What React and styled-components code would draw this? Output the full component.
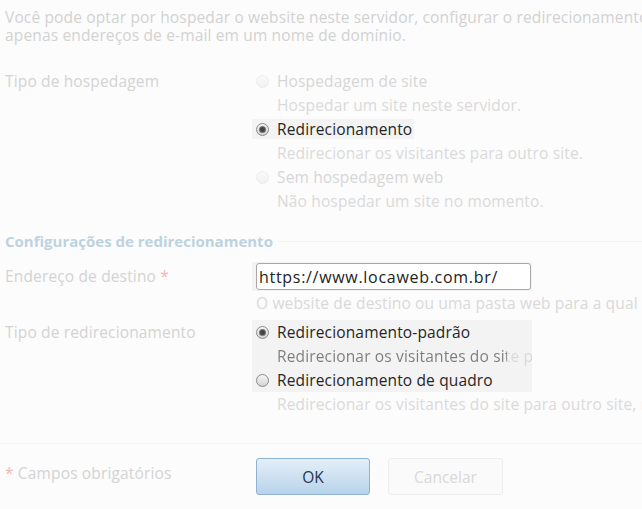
import React from 'react';
import styled, { createGlobalStyle } from 'styled-components';

const GlobalStyle = createGlobalStyle`
  html, body {
    margin: 0;
    padding: 0;
    background: #fcfcfc;
    overflow: hidden;
  }
`;

const Page = styled.div`
  width: 642px;
  height: 509px;
  overflow: hidden;
  padding-top: 8px;
  box-sizing: border-box;
  background: #fcfcfc;
  font-family: 'Open Sans', 'Noto Sans', sans-serif;
  font-size: 15.5px;
  letter-spacing: 0.15px;
  color: #d4d4d4;
`;

const Intro = styled.p`
  margin: 0;
  padding-left: 5px;
  line-height: 18px;
  white-space: nowrap;
  color: #d2d2d2;
`;

const FormRow = styled.div`
  display: grid;
  grid-template-columns: 252px 1fr;
  margin-top: ${(p) => p.$gap}px;
`;

const FieldLabel = styled.div`
  padding-left: 5px;
  line-height: ${(p) => p.$line || 24}px;
  color: #d3d3d3;
  white-space: nowrap;
`;

const Required = styled.span`
  color: #f4b8b0;
`;

const Options = styled.div`
  display: flex;
  flex-direction: column;
`;

const OptionLabel = styled.div`
  display: inline-flex;
  align-self: flex-start;
  align-items: center;
  gap: 8px;
  height: 20px;
  margin: 2px 0;
  padding: 0 2px 0 4px;
  white-space: nowrap;
  background: ${(p) => (p.$lit ? '#f3f3f3' : 'transparent')};
  color: ${(p) => (p.$lit ? '#262626' : '#d6d6d6')};
`;

const Radio = styled.span`
  flex: none;
  width: 13px;
  height: 13px;
  box-sizing: border-box;
  border-radius: 50%;
  border: 1px solid ${(p) => (p.$lit ? '#8a8a8a' : '#ececec')};
  background: ${(p) =>
    p.$lit
      ? 'linear-gradient(180deg, #f4f4f4 0%, #d4d4d4 100%)'
      : 'linear-gradient(180deg, #fafafa 0%, #f1f1f1 100%)'};
  display: flex;
  align-items: center;
  justify-content: center;
  &::after {
    content: '';
    display: ${(p) => (p.$checked ? 'block' : 'none')};
    width: 5px;
    height: 5px;
    border-radius: 50%;
    background: #444;
    box-shadow: 0 0 0 1px #777;
  }
`;

const Desc = styled.div`
  padding-left: 25px;
  line-height: 24px;
  white-space: nowrap;
  color: ${(p) => (p.$lit ? 'transparent' : '#dadada')};
  ${(p) =>
    p.$lit &&
    `
    background: linear-gradient(90deg, #7c7c7c 0 ${p.$lit}px, #d9d9d9 ${p.$lit}px);
    -webkit-background-clip: text;
    background-clip: text;
  `}
`;

const SectionTitle = styled.div`
  display: flex;
  align-items: center;
  gap: 4px;
  margin-top: 18px;
  padding-left: 5px;
  line-height: 20px;
  font-size: 15px;
  letter-spacing: 0;
  font-weight: 700;
  color: #bcd3df;
  white-space: nowrap;
  &::after {
    content: '';
    flex: 1;
    height: 1px;
    background: #f3f3f3;
  }
`;

const Spotlight = styled.div`
  display: flex;
  flex-direction: column;
  align-self: flex-start;
  width: 280px;
  box-sizing: border-box;
  padding: ${(p) => p.$pad || '0'};
  background: #f3f3f3;
`;

const TextInput = styled.input`
  width: 275px;
  height: 27px;
  box-sizing: border-box;
  padding: 0 2px;
  border: 1px solid #a9a9a9;
  border-radius: 3px;
  background: #fff;
  font-family: inherit;
  font-size: 16px;
  letter-spacing: 0.7px;
  color: #222;
  outline: none;
`;

const Hint = styled.div`
  padding-left: 4px;
  line-height: 24px;
  white-space: nowrap;
  color: #d9d9d9;
`;

const Footer = styled.div`
  display: grid;
  grid-template-columns: 252px 1fr;
  margin-top: 27px;
  padding-top: 14px;
  border-top: 1px solid #f3f3f3;
`;

const Buttons = styled.div`
  display: flex;
  gap: 18px;
  padding-left: 4px;
`;

const Button = styled.button`
  width: ${(p) => (p.$primary ? 114 : 115)}px;
  height: 37px;
  border-radius: 3px;
  font-family: inherit;
  font-size: 15.5px;
  cursor: pointer;
  border: 1px solid ${(p) => (p.$primary ? '#8fb2d3' : '#ededed')};
  background: ${(p) =>
    p.$primary ? 'linear-gradient(180deg, #e4eff9 0%, #b8d3ea 100%)' : '#fafafa'};
  color: ${(p) => (p.$primary ? '#1f3550' : '#d8d8d8')};
`;

const hosting = [
  { label: 'Hospedagem de site', desc: 'Hospedar um site neste servidor.' },
  { label: 'Redirecionamento', desc: 'Redirecionar os visitantes para outro site.', checked: true, lit: true },
  { label: 'Sem hospedagem web', desc: 'Não hospedar um site no momento.' },
];

export default function App() {
  return (
    <>
      <GlobalStyle />
      <Page>
        <Intro>
          Você pode optar por hospedar o website neste servidor, configurar o redirecionamento para outro site ou hospedar
          <br />
          apenas endereços de e-mail em um nome de domínio.
        </Intro>

        <FormRow $gap={25}>
          <FieldLabel>Tipo de hospedagem</FieldLabel>
          <Options>
            {hosting.map((o) => (
              <React.Fragment key={o.label}>
                <OptionLabel $lit={o.lit}>
                  <Radio $lit={o.lit} $checked={o.checked} />
                  {o.label}
                </OptionLabel>
                <Desc>{o.desc}</Desc>
              </React.Fragment>
            ))}
          </Options>
        </FormRow>

        <SectionTitle>Configurações de redirecionamento</SectionTitle>

        <FormRow $gap={11}>
          <FieldLabel $line={28}>
            Endereço de destino <Required>*</Required>
          </FieldLabel>
          <div>
            <Spotlight $pad="1px 1px 1px 4px">
              <TextInput defaultValue="https://www.locaweb.com.br/" />
            </Spotlight>
            <Hint>O website de destino ou uma pasta web para a qual os visitantes serão redirecionados.</Hint>
          </div>
        </FormRow>

        <FormRow $gap={5}>
          <FieldLabel>Tipo de redirecionamento</FieldLabel>
          <Options>
            <Spotlight>
              <OptionLabel $lit>
                <Radio $lit $checked />
                Redirecionamento-padrão
              </OptionLabel>
              <Desc $lit={255}>Redirecionar os visitantes do site para outro site e mostrar o novo endereço.</Desc>
              <OptionLabel $lit>
                <Radio $lit />
                Redirecionamento de quadro
              </OptionLabel>
            </Spotlight>
            <Desc>Redirecionar os visitantes do site para outro site, mantendo o endereço original.</Desc>
          </Options>
        </FormRow>

        <Footer>
          <FieldLabel $line={30}>
            <Required>*</Required> Campos obrigatórios
          </FieldLabel>
          <Buttons>
            <Button $primary>OK</Button>
            <Button>Cancelar</Button>
          </Buttons>
        </Footer>
      </Page>
    </>
  );
}
